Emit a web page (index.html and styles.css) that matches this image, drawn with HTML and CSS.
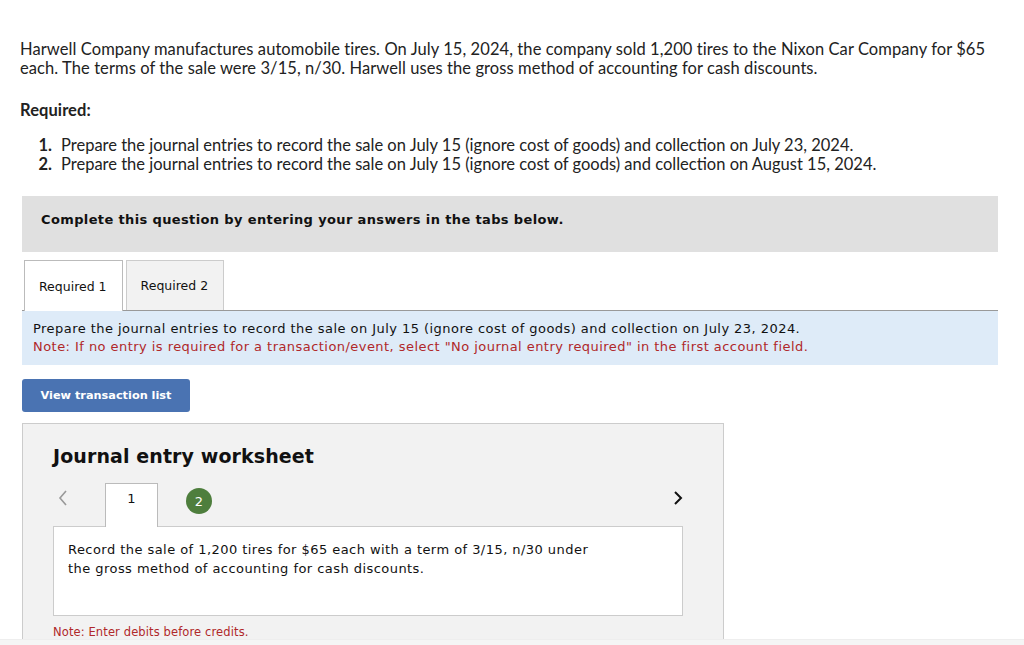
FILE: index.html
```html
<!DOCTYPE html>
<html>
<head>
<meta charset="utf-8">
<link rel="stylesheet" href="styles.css">
</head>
<body>
<div class="page">
  <p class="intro">Harwell Company manufactures automobile tires. On July 15, 2024, the company sold 1,200 tires to the Nixon Car Company for $65 each. The terms of the sale were 3/15, n/30. Harwell uses the gross method of accounting for cash discounts.</p>
  <p class="req-title">Required:</p>
  <ol class="req-list">
    <li><span class="num">1.</span>Prepare the journal entries to record the sale on July 15 (ignore cost of goods) and collection on July 23, 2024.</li>
    <li><span class="num">2.</span>Prepare the journal entries to record the sale on July 15 (ignore cost of goods) and collection on August 15, 2024.</li>
  </ol>
  <div class="complete-box">Complete this question by entering your answers in the tabs below.</div>
  <div class="tabs">
    <div class="tab active">Required 1</div>
    <div class="tab">Required 2</div>
  </div>
  <div class="instr">
    <div>Prepare the journal entries to record the sale on July 15 (ignore cost of goods) and collection on July 23, 2024.</div>
    <div class="red">Note: If no entry is required for a transaction/event, select "No journal entry required" in the first account field.</div>
  </div>
  <button class="btn">View transaction list</button>
  <div class="worksheet">
    <h2 class="ws-title">Journal entry worksheet</h2>
    <div class="ws-nav">
      <span class="arrow prev"><svg width="10" height="16" viewBox="0 0 10 16"><path d="M8 1 L2 8 L8 15" fill="none" stroke="#999" stroke-width="1.6"/></svg></span>
      <div class="step current">1</div>
      <div class="step-wrap"><span class="circle">2</span></div>
      <span class="arrow next"><svg width="10" height="16" viewBox="0 0 10 16"><path d="M2 2 L8 8 L2 14" fill="none" stroke="#111" stroke-width="2"/></svg></span>
    </div>
    <div class="ws-desc">Record the sale of 1,200 tires for $65 each with a term of 3/15, n/30 under the gross method of accounting for cash discounts.</div>
    <div class="ws-note">Note: Enter debits before credits.</div>
  </div>
</div>
<div class="footer"></div>
</body>
</html>
```

FILE: styles.css
```css
html, body {
  margin: 0;
  padding: 0;
  background: #fff;
  overflow: hidden;
}
body {
  height: 645px;
  display: flex;
  flex-direction: column;
}
.page {
  height: 639px;
  overflow: hidden;
  padding: 0 26px 0 22px;
  box-sizing: border-box;
}
.intro, .req-title, .req-list {
  font-family: Lato, "Liberation Sans", sans-serif;
  font-size: 16.5px;
  letter-spacing: 0.08px;
  line-height: 19px;
  color: #222;
}
.intro {
  margin: 40px 0 0 -2px;
}
.req-title {
  font-weight: bold;
  margin: 23px 0 0 -2px;
}
.req-list {
  list-style: none;
  margin: 16px 0 0 0;
  padding: 0;
  letter-spacing: 0;
}
.req-list li {
  display: flex;
}
.req-list .num {
  font-weight: bold;
  text-align: right;
  box-sizing: border-box;
  flex: none;
  margin-left: -22px;
  width: 61px;
  padding-right: 9px;
}
.complete-box {
  margin-top: 22px;
  background: #e0e0e0;
  height: 56px;
  box-sizing: border-box;
  display: flex;
  align-items: center;
  padding: 0 0 10px 19px;
  font-family: Verdana, "DejaVu Sans", sans-serif;
  font-weight: bold;
  font-size: 13px;
  letter-spacing: 0.37px;
  color: #111;
}
.tabs {
  margin-top: 8px;
  display: flex;
  gap: 3px;
  padding-left: 2px;
  border-bottom: 1px solid #999;
  height: 50px;
  align-items: flex-start;
}
.tab {
  height: 50px;
  box-sizing: border-box;
  border: 1px solid #ccc;
  border-bottom: none;
  background: #f2f2f2;
  font-family: Verdana, "DejaVu Sans", sans-serif;
  font-size: 12.5px;
  color: #111;
  display: flex;
  align-items: center;
  padding: 0 15px 0 14px;
}
.tab.active {
  background: #fff;
  height: 51px;
  border-color: #bbb;
  position: relative;
  z-index: 1;
}
.instr {
  background: #deebf8;
  padding: 9px 11px 9px;
  height: 54px;
  box-sizing: border-box;
  font-family: Verdana, "DejaVu Sans", sans-serif;
  font-size: 13px;
  letter-spacing: 0.45px;
  line-height: 18px;
  color: #111;
}
.instr .red, .ws-note {
  color: #b0282a;
}
.btn {
  display: block;
  margin-top: 14px;
  width: 168px;
  height: 33px;
  border: none;
  border-radius: 3px;
  background: #4a73b2;
  color: #fff;
  font-family: Verdana, "DejaVu Sans", sans-serif;
  font-weight: bold;
  font-size: 11.3px;
  padding: 0;
}
.worksheet {
  margin-top: 11px;
  width: 702px;
  box-sizing: border-box;
  background: #f2f2f2;
  border: 1px solid #ccc;
  padding: 20px 40px 20px 30px;
  height: 240px;
}
.ws-title {
  margin: 0;
  font-family: Verdana, "DejaVu Sans", sans-serif;
  font-weight: bold;
  font-size: 19px;
  letter-spacing: 0.1px;
  line-height: 24px;
  color: #111;
}
.ws-nav {
  margin-top: 15px;
  display: flex;
  align-items: flex-end;
  height: 43px;
}
.arrow {
  display: flex;
  align-items: center;
  height: 30px;
  align-self: flex-start;
}
.arrow.prev {
  margin-left: 5px;
  margin-right: 37px;
}
.arrow.next {
  margin-left: auto;
}
.step.current {
  width: 53px;
  height: 44px;
  box-sizing: border-box;
  background: #fff;
  border: 1px solid #bbb;
  border-bottom: none;
  margin-bottom: -1px;
  display: flex;
  justify-content: center;
  padding-top: 7px;
  font-family: "DejaVu Sans", sans-serif;
  font-size: 13px;
  color: #111;
  position: relative;
  z-index: 1;
}
.step-wrap {
  align-self: flex-start;
  margin-left: 28px;
  padding-top: 5px;
}
.circle {
  display: flex;
  width: 26px;
  height: 26px;
  border-radius: 50%;
  background: #4e7e3d;
  color: #fff;
  font-family: "DejaVu Sans", sans-serif;
  font-size: 13px;
  align-items: center;
  justify-content: center;
}
.ws-desc {
  background: #fff;
  border: 1px solid #ccc;
  height: 90px;
  box-sizing: border-box;
  padding: 13px 73px 0 14px;
  font-family: Verdana, "DejaVu Sans", sans-serif;
  font-size: 13px;
  letter-spacing: 0.45px;
  line-height: 19px;
  color: #111;
}
.ws-note {
  margin-top: 9px;
  font-family: Verdana, "DejaVu Sans", sans-serif;
  font-size: 11.5px;
  letter-spacing: 0.12px;
}
.footer {
  flex: 1;
  background: #f5f5f5;
  border-top: 1px solid #eee;
}
```
